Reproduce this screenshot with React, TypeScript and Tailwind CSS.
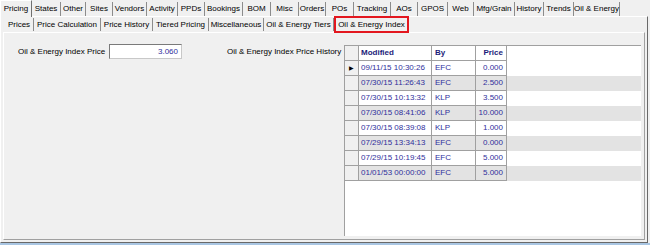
import React from "react";

const topTabs: [string, number][] = [
  ["Pricing", 32],
  ["States", 29],
  ["Other", 25],
  ["Sites", 27],
  ["Vendors", 34],
  ["Activity", 31],
  ["PPDs", 27],
  ["Bookings", 38],
  ["BOM", 28],
  ["Misc", 28],
  ["Orders", 27],
  ["POs", 28],
  ["Tracking", 37],
  ["AOs", 27],
  ["GPOS", 30],
  ["Web", 26],
  ["Mfg/Grain", 41],
  ["History", 29],
  ["Trends", 30],
  ["Oil & Energy", 46],
];

const subTabs: [string, number][] = [
  ["Prices", 29],
  ["Price Calculation", 67],
  ["Price History", 52],
  ["Tiered Pricing", 56],
  ["Miscellaneous", 55],
  ["Oil & Energy Tiers", 70],
];

const history = [
  ["09/11/15 10:30:26", "EFC", "0.000"],
  ["07/30/15 11:26:43", "EFC", "2.500"],
  ["07/30/15 10:13:32", "KLP", "3.500"],
  ["07/30/15 08:41:06", "KLP", "10.000"],
  ["07/30/15 08:39:08", "KLP", "1.000"],
  ["07/29/15 13:34:13", "EFC", "0.000"],
  ["07/29/15 10:19:45", "EFC", "5.000"],
  ["01/01/53 00:00:00", "EFC", "5.000"],
];

const HistoryGrid = () => (
  <div className="flex-1 h-[191px] mt-[1px] bg-white border-l border-t border-[#a0a0a0] flex flex-col">
    <div className="flex h-[15px] text-[#1c1c7a] font-bold">
      <div className="w-[14px] bg-[#f0f0f0] border-r border-b border-[#a0a0a0]" />
      <div className="w-[73px] pl-[2px] flex items-center border-r border-b border-[#a0a0a0]">Modified</div>
      <div className="w-[44px] pl-[3px] flex items-center border-r border-b border-[#a0a0a0]">By</div>
      <div className="w-[31px] pr-[3px] flex items-center justify-end border-r border-b border-[#a0a0a0]">Price</div>
    </div>
    {history.map(([when, by, price], i) => (
      <div key={when} className={`flex h-[15px] text-[#2f2f9c] ${i % 2 ? "bg-[#e3e3e3]" : "bg-white"}`}>
        <div className="w-[14px] bg-[#f0f0f0] border-r border-b border-[#a0a0a0] flex items-center justify-center">
          {i === 0 && <span className="text-black text-[6px] leading-none">▶</span>}
        </div>
        <div className="w-[73px] pl-[2px] flex items-center border-r border-b border-[#a0a0a0]">{when}</div>
        <div className="w-[44px] pl-[3px] flex items-center border-r border-b border-[#a0a0a0]">{by}</div>
        <div className="w-[31px] pr-[3px] flex items-center justify-end border-r border-b border-[#a0a0a0]">{price}</div>
      </div>
    ))}
  </div>
);

export default function App() {
  return (
    <div className="w-[650px] h-[245px] bg-[#f0f0f0] flex flex-col overflow-hidden font-['Liberation_Sans',Arial,sans-serif] text-[8px] text-black leading-none">
      {/* main tabs */}
      <div className="flex h-[16px] shrink-0">
        {topTabs.map(([label, w], i) => (
          <div
            key={label}
            style={{ width: w }}
            className={
              i === 0
                ? "h-[17px] flex items-center justify-center border-l border-t border-white border-r border-r-[#707070] bg-[#f0f0f0] z-10"
                : "h-[14px] mt-[2px] flex items-center justify-center border-r border-[#8c8c8c]"
            }
          >
            {label}
          </div>
        ))}
      </div>

      {/* outer page */}
      <div className="w-[648px] h-[227px] shrink-0 border-l border-t border-white border-r border-b border-r-[#696969] border-b-[#696969] pl-[2px] pr-[2px] pb-[2px] flex flex-col">
        {/* sub tabs */}
        <div className="flex h-[15px] shrink-0 pl-[2px] items-end">
          {subTabs.map(([label, w]) => (
            <div
              key={label}
              style={{ width: w }}
              className="h-[13px] mb-[1px] flex items-center justify-center border-r border-[#8c8c8c]"
            >
              {label}
            </div>
          ))}
          <div className="w-[75px] h-[17px] -mb-[1px] flex items-center justify-center border-2 border-[#e3171f] bg-[#f0f0f0] z-10">
            Oil &amp; Energy Index
          </div>
        </div>

        {/* inner page */}
        <div className="flex-1 border-l border-t border-white border-r border-b border-r-[#a0a0a0] border-b-[#a0a0a0] pt-[11px] pr-[3px] pb-[2px] flex items-start">
          <div className="flex items-center pl-[14px]">
            <span className="w-[91px]">Oil &amp; Energy Index Price</span>
            <div className="w-[73px] h-[15px] bg-white border border-[#c8c8c8] border-l-[#7a7a7a] border-t-[#7a7a7a] flex items-center justify-end pr-[3px] text-[#2f2f9c]">
              3.060
            </div>
          </div>
          <span className="ml-[45px] w-[117px] mt-[4px]">Oil &amp; Energy Index Price History</span>
          <HistoryGrid />
        </div>
      </div>
      <div className="h-[2px] mt-[0px] bg-[#a9c6e3]" />
    </div>
  );
}
